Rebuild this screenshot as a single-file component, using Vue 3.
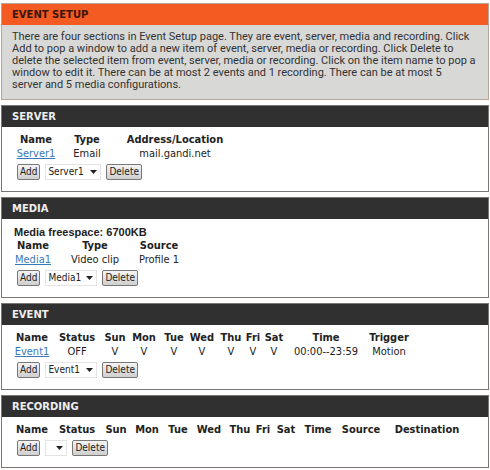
<template>
  <main class="page">
    <section class="panel intro">
      <h1>EVENT SETUP</h1>
      <p>
        There are four sections in Event Setup page. They are event, server, media and recording. Click
        Add to pop a window to add a new item of event, server, media or recording. Click Delete to
        delete the selected item from event, server, media or recording. Click on the item name to pop a
        window to edit it. There can be at most 2 events and 1 recording. There can be at most 5<br>
        server and 5 media configurations.
      </p>
    </section>

    <section v-for="s in sections" :key="s.id" class="panel">
      <h2>{{ s.title }}</h2>
      <div class="body">
        <p v-if="s.note" class="note">{{ s.note }}</p>
        <table>
          <colgroup>
            <col v-for="(c, i) in s.columns" :key="i" :style="{ width: c.width + 'px' }">
          </colgroup>
          <thead>
            <tr>
              <th v-for="c in s.columns" :key="c.label" scope="col">{{ c.label }}</th>
            </tr>
          </thead>
          <tbody>
            <tr v-for="row in s.rows" :key="row[0]">
              <td v-for="(cell, i) in row" :key="i">
                <a v-if="i === 0" href="#">{{ cell }}</a>
                <template v-else>{{ cell }}</template>
              </td>
            </tr>
          </tbody>
        </table>
        <div class="actions">
          <button type="button">Add</button>
          <label class="picker" :class="s.id">
            <select v-model="selected[s.id]" :aria-label="s.title">
              <option v-for="row in s.rows" :key="row[0]" :value="row[0]">{{ row[0] }}</option>
            </select>
            <svg class="arrow" viewBox="0 0 7 4" aria-hidden="true">
              <path d="M0 0H7L3.5 4Z" />
            </svg>
          </label>
          <button type="button">Delete</button>
        </div>
      </div>
    </section>
  </main>
</template>

<script setup>
import { reactive } from 'vue'

const cols = (labels, widths) => labels.map((label, i) => ({ label, width: widths[i] }))
const days = ['Sun', 'Mon', 'Tue', 'Wed', 'Thu', 'Fri', 'Sat']

const sections = [
  {
    id: 'server',
    title: 'SERVER',
    columns: cols(['Name', 'Type', 'Address/Location'], [44, 58, 118]),
    rows: [['Server1', 'Email', 'mail.gandi.net']]
  },
  {
    id: 'media',
    title: 'MEDIA',
    note: 'Media freespace: 6700KB',
    columns: cols(['Name', 'Type', 'Source'], [38, 86, 42]),
    rows: [['Media1', 'Video clip', 'Profile 1']]
  },
  {
    id: 'event',
    title: 'EVENT',
    columns: cols(
      ['Name', 'Status', ...days, 'Time', 'Trigger'],
      [36, 54, 22, 36, 24, 32, 26, 18, 24, 80, 46]
    ),
    rows: [['Event1', 'OFF', 'V', 'V', 'V', 'V', 'V', 'V', 'V', '00:00--23:59', 'Motion']]
  },
  {
    id: 'recording',
    title: 'RECORDING',
    columns: cols(
      ['Name', 'Status', ...days, 'Time', 'Source', 'Destination'],
      [36, 54, 24, 38, 24, 38, 24, 22, 24, 40, 46, 86]
    ),
    rows: []
  }
]

const selected = reactive({ server: 'Server1', media: 'Media1', event: 'Event1', recording: '' })
</script>

<style>
body {
  background: #fffefc;
}
</style>

<style scoped>
.page {
  display: flex;
  flex-direction: column;
  gap: 5px;
  padding: 3px 1px;
  font-family: "DejaVu Sans Condensed", "DejaVu Sans", sans-serif;
  font-size: 11px;
  line-height: 14px;
  color: #222;
}

.panel {
  border: 1px solid #777;
  background: #fff;
}

h1,
h2 {
  margin: 0;
  padding: 0 10px;
  background: #303030;
  color: #eee;
  font-family: "DejaVu Sans", sans-serif;
  font-size: 10px;
  font-weight: bold;
  line-height: 21px;
}

.intro {
  border-color: #b9a596;
  background: #d8d8d6;
}

.intro h1 {
  background: #f35b22;
  color: #3c1408;
}

.intro p {
  margin: 0;
  padding: 6px 6px 8px 10px;
  font-family: Roboto, sans-serif;
  line-height: 12px;
  color: #333;
}

.body {
  padding: 6px 12px 11px;
}

.note {
  margin: 0;
  font-family: "Liberation Sans", sans-serif;
  font-weight: bold;
}

table {
  table-layout: fixed;
  width: 0;
  border-collapse: collapse;
}

th,
td {
  padding: 0;
  text-align: center;
  white-space: nowrap;
}

a {
  color: #3b78b8;
}

.actions {
  display: flex;
  align-items: center;
  gap: 5px;
  padding: 3px 3px 0;
}

button {
  height: 16px;
  padding: 0 2px;
  border: 1px solid #777;
  border-radius: 2px;
  background: linear-gradient(#f4f4f4, #cfcfcf);
  color: #222;
  font: inherit;
  font-size: 10px;
  line-height: 14px;
}

.picker {
  display: grid;
  align-items: center;
  width: 52px;
}

.picker.server {
  width: 56px;
}

.picker.recording {
  width: 22px;
}

.picker select,
.arrow {
  grid-area: 1 / 1;
}

.picker select {
  appearance: none;
  width: 100%;
  height: 16px;
  padding: 0 0 0 2px;
  border: 1px solid #e4e4e4;
  border-radius: 0;
  background: #fff;
  color: #222;
  font: inherit;
  font-size: 10px;
}

.arrow {
  justify-self: end;
  width: 7px;
  height: 4px;
  margin-right: 4px;
  fill: #222;
  pointer-events: none;
}
</style>
